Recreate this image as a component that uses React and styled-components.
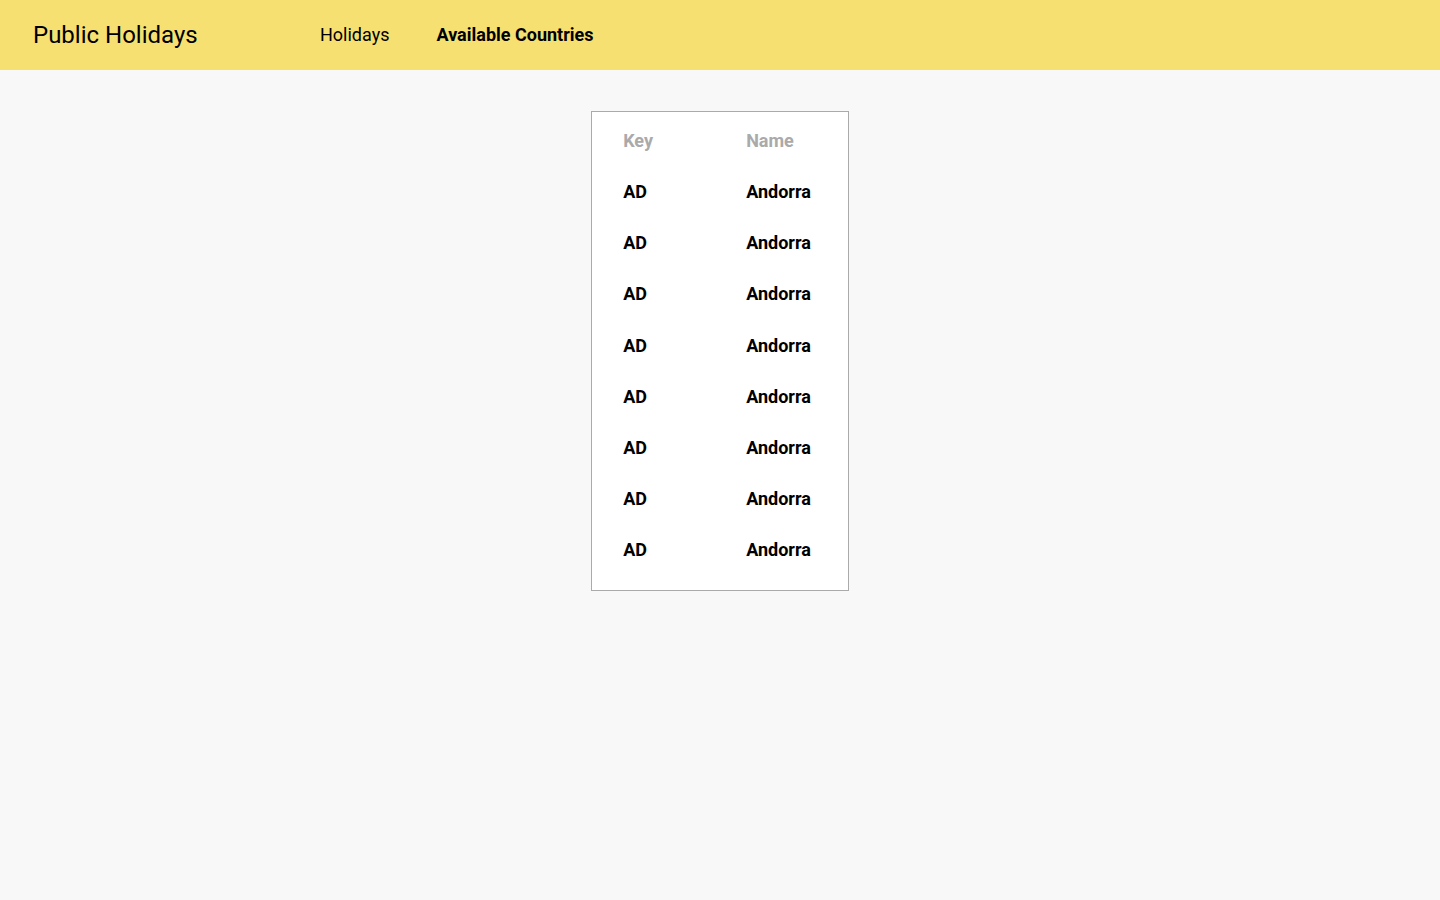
import React from 'react';
import styled, { createGlobalStyle } from 'styled-components';

const GlobalStyle = createGlobalStyle`
  body {
    margin: 0;
    background: #f8f8f8;
    font-family: Roboto, "Liberation Sans", sans-serif;
    color: #000;
  }
`;

const countries = Array.from({ length: 8 }, () => ({ key: 'AD', name: 'Andorra' }));

function App() {
  return (
    <>
      <GlobalStyle />
      <Header>
        <Title>Public Holidays</Title>
        <Nav>
          <NavLink>Holidays</NavLink>
          <NavLink $active>Available Countries</NavLink>
        </Nav>
      </Header>
      <Main>
        <Card>
          <Table>
            <thead>
              <tr>
                <Th $key>Key</Th>
                <Th>Name</Th>
              </tr>
            </thead>
            <tbody>
              {countries.map((c, i) => (
                <tr key={i}>
                  <Td>{c.key}</Td>
                  <Td>{c.name}</Td>
                </tr>
              ))}
            </tbody>
          </Table>
        </Card>
      </Main>
    </>
  );
}

const Header = styled.header`
  height: 70px;
  background: #f6e071;
  display: flex;
  align-items: center;
  padding: 0 33px;
`;

const Title = styled.h1`
  margin: 0;
  width: 287px;
  font-size: 24px;
  font-weight: 400;
`;

const Nav = styled.nav`
  display: flex;
  gap: 47px;
  padding-bottom: 2px;
`;

const NavLink = styled.a`
  font-size: 18px;
  font-weight: ${(p) => (p.$active ? 700 : 400)};
  color: #000;
  cursor: pointer;
`;

const Main = styled.main`
  display: flex;
  justify-content: center;
  padding-top: 41px;
`;

const Card = styled.div`
  background: #fff;
  border: 1px solid #aaa;
  padding: 3px 37px 15px 31px;
`;

const Table = styled.table`
  border-collapse: collapse;
`;

const Th = styled.th`
  width: ${(p) => (p.$key ? '123px' : 'auto')};
  height: 51.125px;
  padding: 0;
  text-align: left;
  font-size: 18px;
  font-weight: 700;
  color: #aaa;
`;

const Td = styled.td`
  height: 51.125px;
  padding: 0;
  font-size: 18px;
  font-weight: 700;
`;

export default App;
